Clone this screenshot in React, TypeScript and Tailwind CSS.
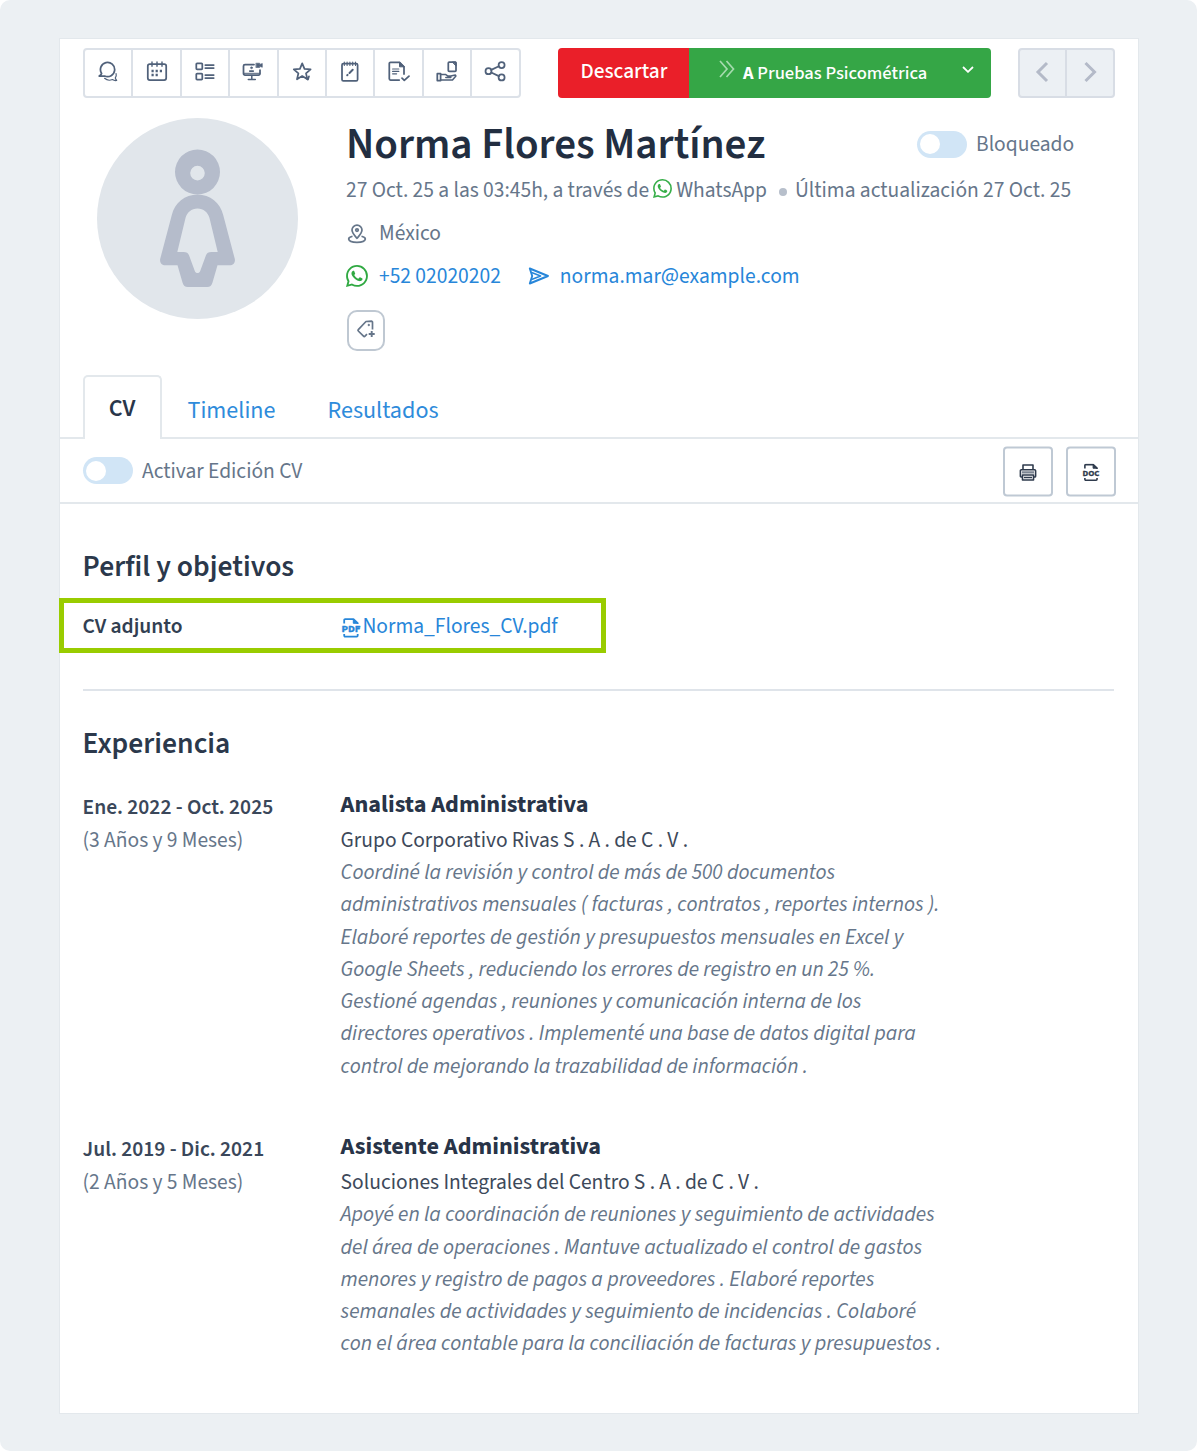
import type { ReactNode } from 'react';
import { BsWhatsapp } from 'react-icons/bs';

function ToolIcon({ children }: { children: ReactNode }) {
  return (
    <svg viewBox="0 0 24 24" className="size-6 shrink-0" fill="none" stroke="currentColor" strokeWidth="1.75" strokeLinejoin="round" strokeLinecap="round">
      {children}
    </svg>
  );
}

const tools: { label: string; icon: ReactNode }[] = [
  {
    label: 'Comentarios',
    icon: (
      <>
        <path d="M5.6 12.4A7.1 7.1 0 1 1 8.6 15H3.2c1.2-.5 2-1.4 2.4-2.6Z" />
        <path d="M8.6 17.3c2.2 2 5.4 2.3 7.9 1.2 1.2.9 2.8 1.2 4.2.9-.9-.8-1.3-1.6-1.4-2.500.9-1.200 1.200-2.700.8-4.200" strokeWidth="1.2" />
      </>
    ),
  },
  {
    label: 'Agenda',
    icon: (
      <>
        <rect x="2.8" y="3.1" width="18.4" height="16" rx="2" />
        <path d="M7 1v4.200M12 1v4.200M17 1v4.200" strokeWidth="1.4" />
        <path d="M6.500 10h2.200M10.600 10h2.200M14.800 10h2.200M6.500 14h2.200M10.600 14h2.200" strokeWidth="2.4" strokeLinecap="butt" />
      </>
    ),
  },
  {
    label: 'Formularios',
    icon: (
      <>
        <rect x="3.3" y="2.3" width="6" height="6" rx=".8" />
        <rect x="3.3" y="12.5" width="6" height="6" rx=".8" />
        <path d="M12.3 4h8.400M12.300 7h8.400M12.300 14h8.400M12.300 17h8.400" />
      </>
    ),
  },
  {
    label: 'Videoentrevista',
    icon: (
      <>
        <path d="M13 3.600H4a1.500 1.500 0 0 0-1.500 1.500v7.400A1.500 1.500 0 0 0 4 14h13.500a1.500 1.500 0 0 0 1.500-1.500V9" />
        <path d="M10.800 14.500v3.500M7.300 18.400h7" strokeWidth="1.5" />
        <path d="M2.800 12.300h16" strokeWidth="1" />
        <circle cx="10.500" cy="6.800" r="1" fill="currentColor" strokeWidth=".5" />
        <path d="M8.800 10h3.400" />
        <path d="M15.200 2.200h3.500v1.300l2.600-1v3.800l-2.600-1v1.200h-3.500z" fill="currentColor" strokeWidth=".6" />
      </>
    ),
  },
  {
    label: 'Valorar',
    icon: (
      <>
        <path d="m12.200 2.300 2.300 5.600 6.100.5-4.600 4 1.400 5.900-5.200-3.200L7 18.300l1.400-5.900-4.600-4 6.100-.5z" />
        <path d="m16 16.800 2 1.700 1-3.200" strokeWidth="1.7" />
      </>
    ),
  },
  {
    label: 'Notas',
    icon: (
      <>
        <rect x="4" y="2.700" width="15.600" height="17.200" rx="1.400" />
        <path d="M6.300 1v3.400M9.100 1v3.400M11.900 1v3.400M14.700 1v3.400M17.500 1v3.400" strokeWidth="1.100" />
        <path d="m11.500 12 3.200-3.200M9.200 14.300l.4-.4" strokeWidth="2" />
      </>
    ),
  },
  {
    label: 'Evaluación',
    icon: (
      <>
        <path d="M12.200 19H3.500a1.200 1.200 0 0 1-1.200-1.200V2.500a1.200 1.200 0 0 1 1.200-1.200h9L17 5.800V13" />
        <path d="M12.500 1.300v4.500H17z" fill="currentColor" strokeWidth="1" />
        <path d="M5.600 8h6.200M5.600 10.400h6.200M5.600 12.800h4" strokeWidth="1.200" />
        <path d="m15 17.200 2.300 2.200 4.700-4.300" />
      </>
    ),
  },
  {
    label: 'Entregar documento',
    icon: (
      <>
        <rect x="13.300" y="1" width="7.700" height="9.300" rx=".9" />
        <path d="M17.600 1H21v3.600z" fill="currentColor" strokeWidth="1" />
        <rect x="2.300" y="12.700" width="3.300" height="6.800" />
        <path d="M5.600 13.600h5.200l1.800 1.300h3.200v1.500h-5M15.800 14.900l4.500-.9.6.9-3.400 4.100H5.600" strokeWidth="1.500" />
      </>
    ),
  },
  {
    label: 'Compartir',
    icon: (
      <>
        <circle cx="5.500" cy="10.200" r="3" />
        <circle cx="18.600" cy="4" r="3" />
        <circle cx="18.600" cy="16.400" r="3" />
        <path d="m8.200 8.900 7.700-3.600M8.200 11.500l7.700 3.600" />
      </>
    ),
  },
];

function Toggle() {
  return (
    <span className="flex h-[27px] w-[50px] shrink-0 items-center rounded-full bg-[#d1e5f6] pl-[3px]">
      <span className="size-5 rounded-full bg-white" />
    </span>
  );
}

function FileIcon({ label, className }: { label: string; className: string }) {
  return (
    <svg viewBox="0 0 20 20" className={className} fill="none" stroke="currentColor" strokeWidth="1.8" strokeLinejoin="round">
      <path d="M3.200 5.500V2.200a1 1 0 0 1 1-1h8.300l4.200 4v.8" />
      <path d="M12.300 1.400v3.900h4.200z" fill="currentColor" strokeWidth="1" />
      <path d="M3.200 16v1.600a1 1 0 0 0 1 1h11.500a1 1 0 0 0 1-1V16" />
      <text x="10" y="13.700" textAnchor="middle" textLength="19" lengthAdjust="spacingAndGlyphs" fontSize="9.500" fontWeight="700" fill="currentColor" strokeWidth=".3">
        {label}
      </text>
    </svg>
  );
}

type Job = { dates: string; length: string; title: string; company: string; lines: string[] };

const jobs: Job[] = [
  {
    dates: 'Ene. 2022 - Oct. 2025',
    length: '(3 Años y 9 Meses)',
    title: 'Analista Administrativa',
    company: 'Grupo Corporativo Rivas S . A . de C . V .',
    lines: [
      'Coordiné la revisión y control de más de 500 documentos',
      'administrativos mensuales ( facturas , contratos , reportes internos ).',
      'Elaboré reportes de gestión y presupuestos mensuales en Excel y',
      'Google Sheets , reduciendo los errores de registro en un 25 %.',
      'Gestioné agendas , reuniones y comunicación interna de los',
      'directores operativos . Implementé una base de datos digital para',
      'control de mejorando la trazabilidad de información .',
    ],
  },
  {
    dates: 'Jul. 2019 - Dic. 2021',
    length: '(2 Años y 5 Meses)',
    title: 'Asistente Administrativa',
    company: 'Soluciones Integrales del Centro S . A . de C . V .',
    lines: [
      'Apoyé en la coordinación de reuniones y seguimiento de actividades',
      'del área de operaciones . Mantuve actualizado el control de gastos',
      'menores y registro de pagos a proveedores . Elaboré reportes',
      'semanales de actividades y seguimiento de incidencias . Colaboré',
      'con el área contable para la conciliación de facturas y presupuestos .',
    ],
  },
];

function Toolbar() {
  return (
    <div className="flex h-[50px] pr-[23.500px] pl-[23px]">
      <div className="flex w-[437.500px] divide-x-2 divide-[#dce1e8] rounded-[4px] border-2 border-[#dce1e8] text-[#50617a]">
        {tools.map((tool) => (
          <button key={tool.label} aria-label={tool.label} className="flex flex-1 items-center justify-center">
            <ToolIcon>{tool.icon}</ToolIcon>
          </button>
        ))}
      </div>
      <div className="ml-[37.500px] flex overflow-hidden rounded-[4px] text-white">
        <button className="w-[131px] bg-[#ea1f29] pb-px pl-px text-[21.400px] font-medium">Descartar</button>
        <button className="flex w-[301.500px] items-center bg-[#35a646] pl-[30px] text-[18.600px] font-medium">
          <svg viewBox="0 0 16 18" className="mb-2 h-[18px] w-4" fill="none" stroke="#a5dbae" strokeWidth="1.700">
            <path d="m1 1 7 8-7 8M7.500 1l7 8-7 8" />
          </svg>
          <span className="ml-2 pt-px whitespace-nowrap">
            <b className="text-[18.400px] font-bold">A</b> Pruebas Psicométrica
          </span>
          <svg viewBox="0 0 12 7" className="mb-2 ml-[35px] h-[7px] w-3" fill="none" stroke="currentColor" strokeWidth="1.800">
            <path d="m1 1 5 4.800L11 1" />
          </svg>
        </button>
      </div>
      <div className="ml-auto flex w-[97px] divide-x-2 divide-[#d8dde5] rounded-[4px] border-2 border-[#d8dde5] bg-[#ecf0f4] text-[#b4bac8]">
        <button aria-label="Anterior" className="flex flex-1 items-center justify-center">
          <svg viewBox="0 0 14 22" className="mb-[3px] h-[22px] w-3.5" fill="none" stroke="currentColor" strokeWidth="3">
            <path d="m12 2-9 9 9 9" />
          </svg>
        </button>
        <button aria-label="Siguiente" className="flex flex-1 items-center justify-center">
          <svg viewBox="0 0 14 22" className="mb-[3px] h-[22px] w-3.5" fill="none" stroke="currentColor" strokeWidth="3">
            <path d="m2.500 2 9 9-9 9" />
          </svg>
        </button>
      </div>
    </div>
  );
}

function Avatar() {
  return (
    <svg viewBox="0 0 201 201" className="size-[201px] shrink-0">
      <circle cx="100.500" cy="100.500" r="100.500" fill="#e1e6eb" />
      <g fill="#b5bccb" fillRule="evenodd">
        <path d="M100.500 31.500a22.500 22.500 0 1 1 0 45 22.500 22.500 0 0 1 0-45Zm0 16.300a7.300 7.300 0 1 0 0 14.600 7.300 7.300 0 0 0 0-14.600Z" />
        <path d="M100.500 76.500C88 76.500 77.500 85 74.800 97L63.300 140.500c-1 3.600 1.300 6.800 5 6.800H80.500l5 17.200c.9 3 2.500 4.500 5.300 4.500h19.400c2.800 0 4.400-1.500 5.300-4.500l5-17.200h12.200c3.700 0 6-3.200 5-6.800L126.200 97C123.500 85 113 76.500 100.500 76.500Zm0 14c6 0 10.500 4 12 9.500L120.700 134h-6.200c-3 0-4.800 1-5.700 3.700l-5.600 15.200c-1 2.800-4.400 2.800-5.400 0l-5.600-15.200c-.9-2.700-2.700-3.700-5.700-3.700h-6.200l8.200-34c1.500-5.500 6-9.500 12-9.500Z" />
      </g>
    </svg>
  );
}

function Candidate() {
  return (
    <div className="mt-5 flex pl-[37px]">
      <Avatar />
      <div className="ml-12 flex-1 text-[21.500px] whitespace-nowrap text-[#66768a]">
        <div className="flex h-[52px] items-center">
          <h1 className="w-[571px] pt-[2px] text-[43.100px] font-semibold text-[#222e41]">Norma Flores Martínez</h1>
          <Toggle />
          <span className="ml-[9px] pt-[3px]">Bloqueado</span>
        </div>
        <div className="flex h-10 items-center">
          <span className="pt-[2px]">27 Oct. 25 a las 03:45h, a través de</span>
          <BsWhatsapp className="mb-1 ml-1 size-[19px] text-[#36ae48]" />
          <span className="ml-1 pt-[2px]">WhatsApp</span>
          <span className="mt-1 ml-3 size-2 rounded-full bg-[#b7bfcb]" />
          <span className="ml-2 pt-[2px]">Última actualización 27 Oct. 25</span>
        </div>
        <div className="flex h-[46px] items-center">
          <svg viewBox="0 0 20 20" className="mt-[2px] ml-[1px] size-5" fill="none" stroke="currentColor" strokeWidth="1.700" strokeLinejoin="round">
            <path d="M10 14.300C7.500 11.500 5 9 5 6.100a5 5 0 0 1 10 0c0 2.900-2.500 5.400-5 8.200Z" />
            <circle cx="10" cy="6.100" r="1.300" />
            <path d="M5.500 12.300c-2 .5-4 1.500-3.800 2.900.3 1.900 3.800 3.200 8.300 3.200s8-1.300 8.300-3.200c.2-1.400-1.800-2.400-3.800-2.900" />
          </svg>
          <span className="ml-3 pt-[2px]">México</span>
        </div>
        <div className="flex h-[41px] items-center text-[#2786d9]">
          <BsWhatsapp className="mb-[2px] size-[22px] text-[#30a942]" />
          <a className="ml-[11px] pt-[2px]">+52 02020202</a>
          <svg viewBox="0 0 22 18" className="mb-[2px] ml-[27px] h-[18px] w-[22px]" fill="none" stroke="currentColor" strokeWidth="1.900" strokeLinejoin="round">
            <path d="M1.800 1.500 20 9 1.800 16.500l2.400-7.500z" />
            <path d="M3.600 5.500l9 3.500-9 3.500" strokeWidth="1.500" />
          </svg>
          <a className="ml-[10px] pt-[2px]">norma.mar@example.com</a>
        </div>
        <button aria-label="Añadir etiqueta" className="mt-[13px] ml-[.5px] flex h-[41px] w-[38px] items-center justify-center rounded-[10px] border-2 border-[#bfc8d2]">
          <svg viewBox="0 0 20 20" className="mb-1 size-5" fill="none" stroke="currentColor" strokeWidth="1.700" strokeLinejoin="round">
            <path d="M16.500 10.500V3.200a1 1 0 0 0-1-1L10 2.500 2.300 10.600a1 1 0 0 0 0 1.400l5.200 5.200a1 1 0 0 0 1.500 0l2-2" />
            <circle cx="12.800" cy="6" r=".9" fill="currentColor" strokeWidth=".5" />
            <path d="M15.700 12v6M12.700 15h6" strokeWidth="1.900" />
          </svg>
        </button>
      </div>
    </div>
  );
}

function Tabs() {
  return (
    <>
      <div className="mt-6 flex h-16 text-[24.100px] text-[#2e8bdb]">
        <div className="w-[23px] border-b-2 border-[#e3e8ec]" />
        <a className="flex w-[79px] items-center justify-center rounded-t-[5px] border-2 border-b-0 border-[#e3e8ec] pt-[2px] pr-px font-semibold text-[#29364a]">CV</a>
        <div className="flex flex-1 items-center border-b-2 border-[#e3e8ec] pt-2.5 pl-[25.500px]">
          <a>Timeline</a>
          <a className="ml-[52px]">Resultados</a>
        </div>
      </div>
      <div className="flex h-[65px] items-center border-b-2 border-[#e3e8ec] pr-[22px] pl-[23px] text-[21.500px] text-[#66768a]">
        <Toggle />
        <span className="ml-[9px] pt-1">Activar Edición CV</span>
        <button aria-label="Imprimir" className="ml-auto flex size-[50px] translate-y-[.5px] items-center justify-center rounded-[4px] border-2 border-[#bfc9d4] text-[#2f3b4d]">
          <svg viewBox="0 0 18 18" className="mt-0.5 size-[18px]" fill="none" stroke="currentColor" strokeWidth="1.600" strokeLinejoin="round">
            <path d="M4 5.500V1.500h10v4" />
            <path d="M3.500 13.500H2.200a.8.800 0 0 1-.8-.8V7.200a1 1 0 0 1 1-1h13.200a1 1 0 0 1 1 1v5.500a.8.800 0 0 1-.8.800h-1.300" />
            <path d="M3 8.800h12" strokeWidth="2.200" stroke="#7c8592" />
            <path d="M3.500 11.500h11v5h-11z" />
            <path d="M5 14h8" strokeWidth="1.600" />
          </svg>
        </button>
        <button aria-label="Descargar documento" className="ml-[13px] flex size-[50px] translate-y-[.5px] items-center justify-center rounded-[4px] border-2 border-[#bfc9d4] text-[#2f3b4d]">
          <FileIcon label="DOC" className="mt-0.5 size-[18px]" />
        </button>
      </div>
    </>
  );
}

function Experience({ job }: { job: Job }) {
  return (
    <div className="flex whitespace-nowrap">
      <div className="w-[258px] pt-1 text-[21.500px]">
        <p className="leading-8 font-semibold text-[#3a475a]">{job.dates}</p>
        <p className="leading-[33px] text-[#66768a]">{job.length}</p>
      </div>
      <div className="text-[21.500px]">
        <h3 className="-mt-px text-[24.200px] leading-9 font-bold text-[#283448]">{job.title}</h3>
        <p className="mt-px leading-[33px] text-[#3d495a]">{job.company}</p>
        <p className="leading-[32.270px] text-[#66768a] italic">
          {job.lines.map((line) => (
            <span key={line} className="block">
              {line}
            </span>
          ))}
        </p>
      </div>
    </div>
  );
}

export default function App() {
  return (
    <div className="h-[1451px] w-[1197px] rounded-[10px] bg-[#ecf0f3] pt-[38px] pl-[59px] font-['Source_Sans_3','Noto_Sans_CJK_SC',sans-serif]">
      <main className="h-[1376px] w-[1080px] border border-[#e3e8ec] bg-white pt-[9px]">
        <Toolbar />
        <Candidate />
        <Tabs />
        <section className="mt-[43px]">
          <h2 className="pl-[22.600px] text-[29.600px] leading-10 font-semibold text-[#2b384b]">Perfil y objetivos</h2>
          <div className="mt-[11px] -ml-px flex h-[55px] w-[547px] items-center border-[5px] border-[#99cc00] pl-[18.400px] text-[21.500px]">
            <span className="w-[259px] pt-[3px] font-semibold text-[#323f52]">CV adjunto</span>
            <a className="flex items-center text-[#2786d9]">
              <FileIcon label="PDF" className="mt-1 mr-px size-5" />
              <span className="pt-[3px]">Norma_Flores_CV.pdf</span>
            </a>
          </div>
        </section>
        <hr className="mt-[35.500px] mr-6 ml-[23px] border-t-2 border-[#dfe4ea]" />
        <section className="mt-[33.500px] flex flex-col pl-[22.600px]">
          <h2 className="mb-6 text-[29.600px] leading-10 font-semibold text-[#2b384b]">Experiencia</h2>
          <div className="flex flex-col gap-[47.500px]">
            {jobs.map((job) => (
              <Experience key={job.title} job={job} />
            ))}
          </div>
        </section>
      </main>
    </div>
  );
}
